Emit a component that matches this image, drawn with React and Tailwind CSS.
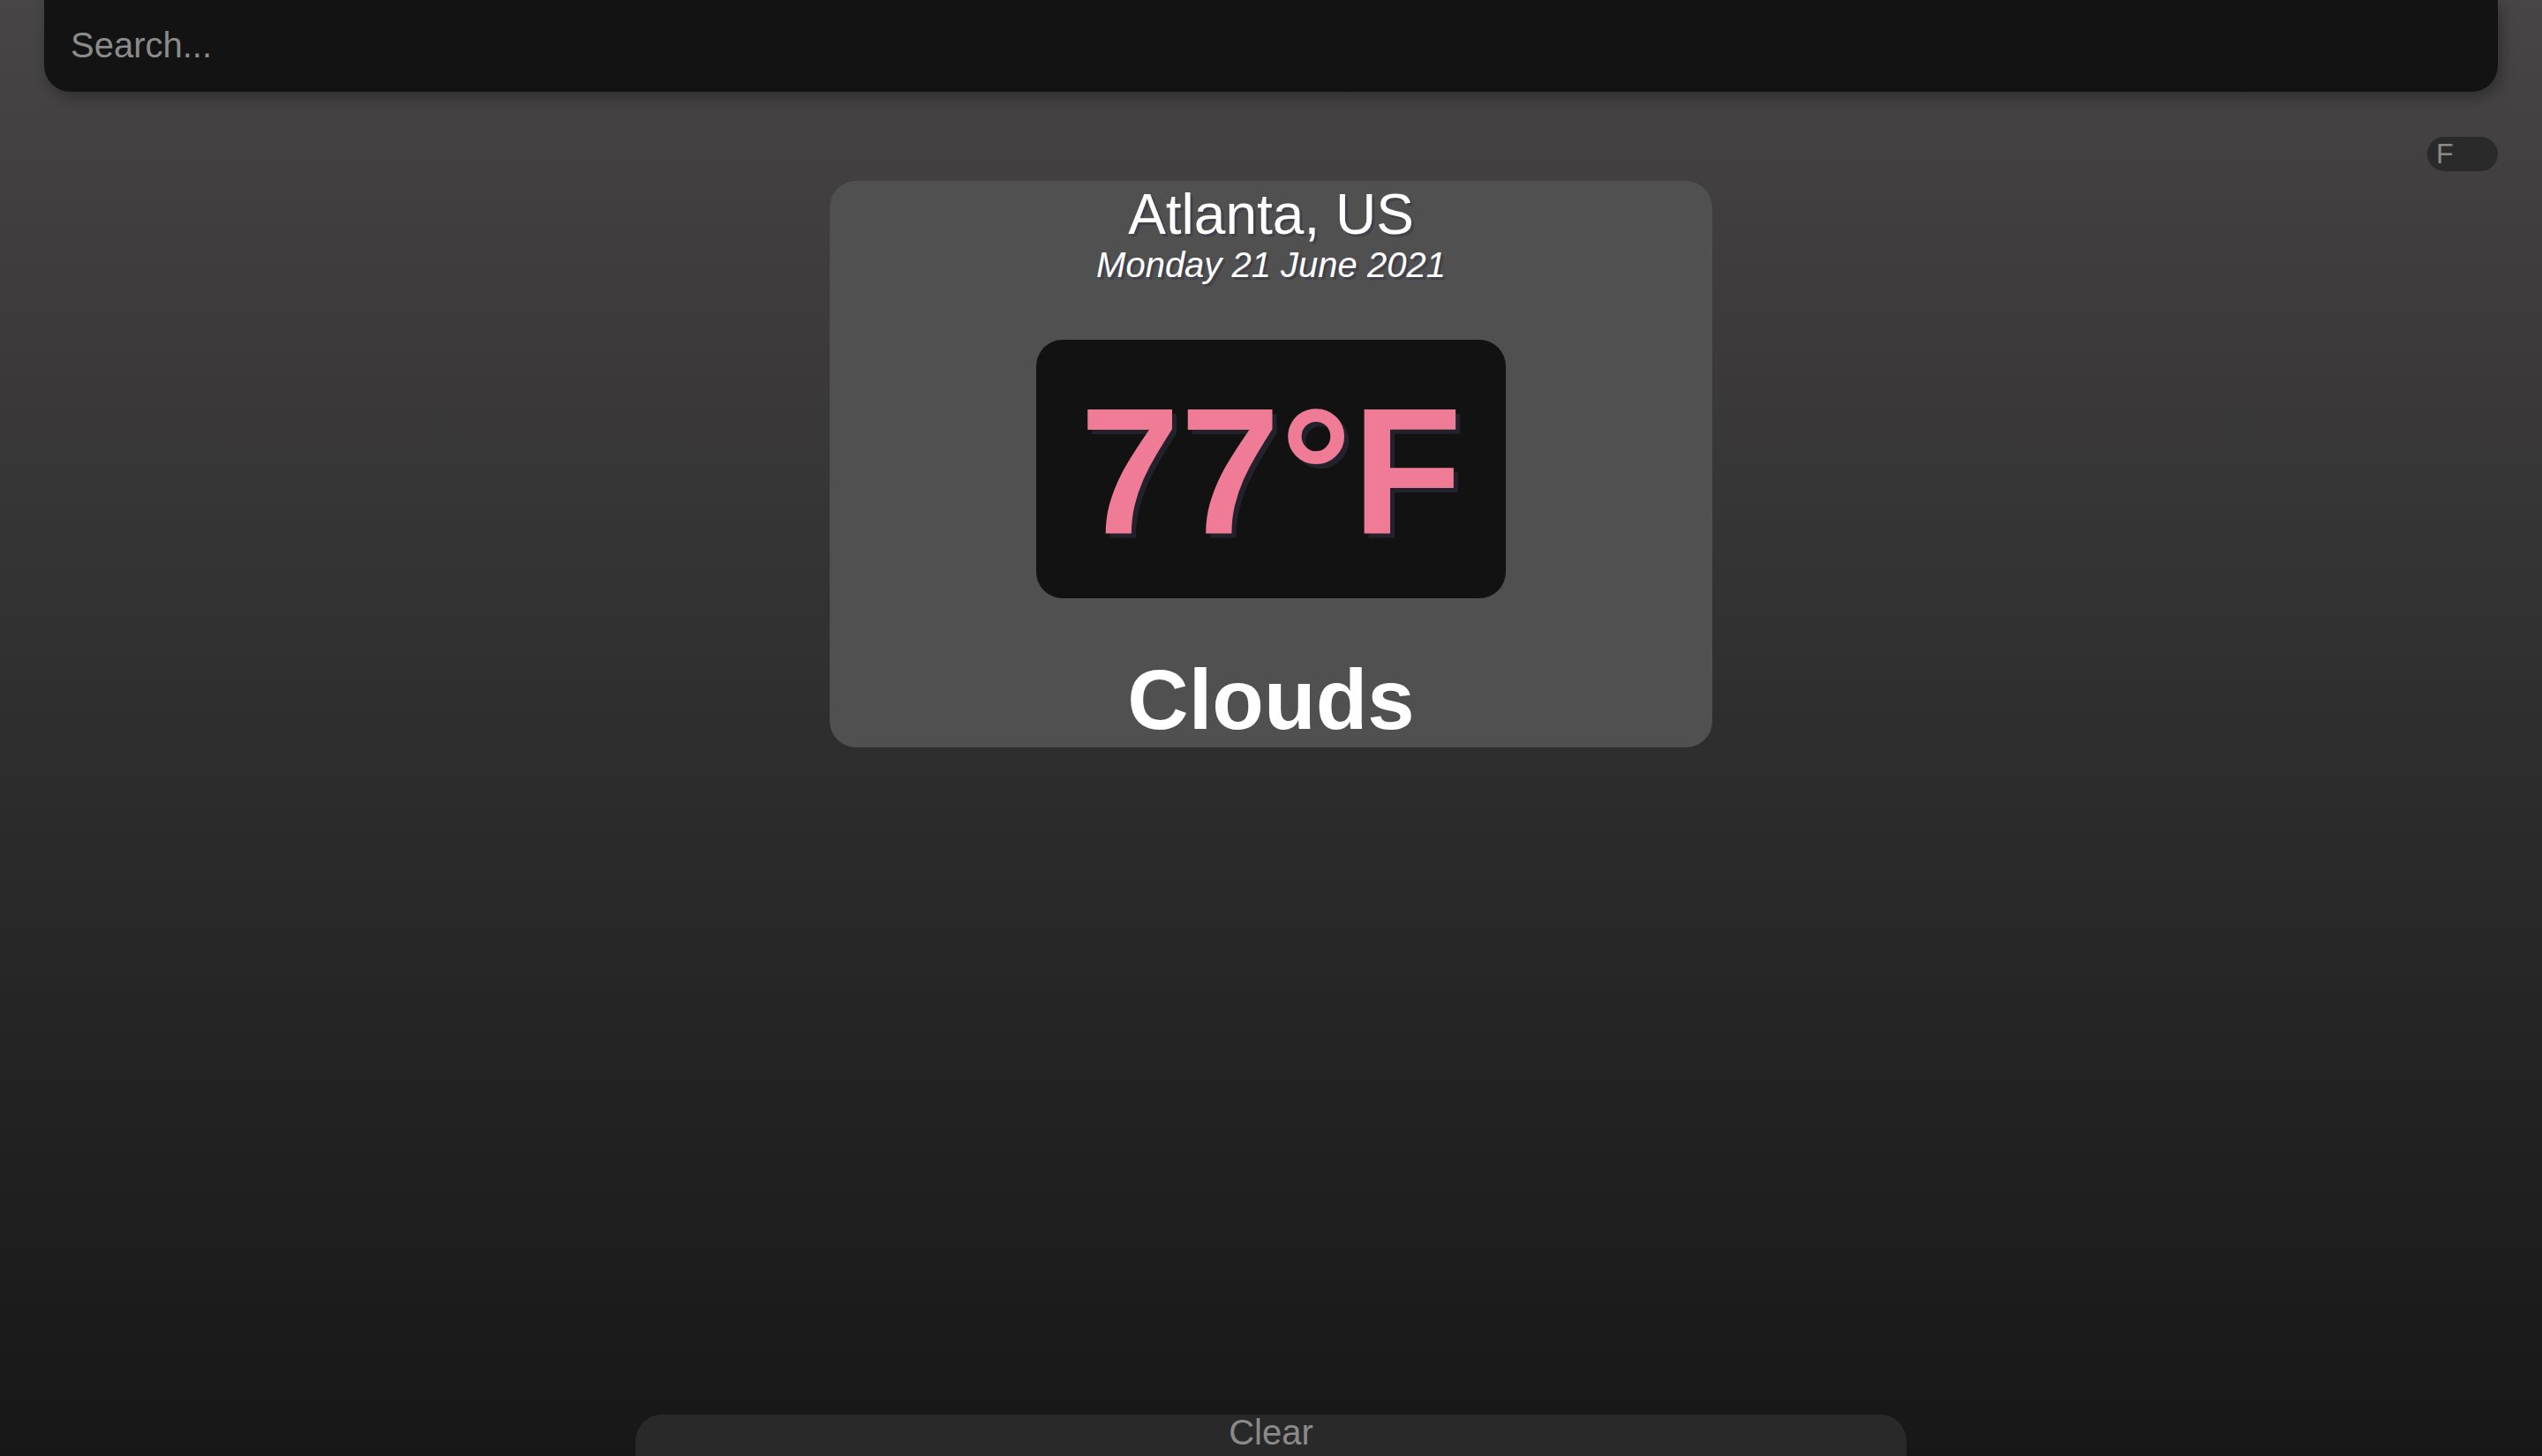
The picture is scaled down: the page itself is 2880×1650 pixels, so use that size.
import React, { useState } from "react";

const font = { fontFamily: '"Liberation Sans", Arial, sans-serif' };

const App = () => {
  const [query, setQuery] = useState("");
  const [unit, setUnit] = useState("F");

  return (
    <div
      className="h-[1650px] overflow-hidden flex flex-col bg-[linear-gradient(to_bottom,#474545,#171717)]"
      style={font}
    >
      {/* search bar */}
      <div className="mx-[50px] h-[104px] rounded-b-[30px] bg-[#131313] shadow-[4px_6px_16px_rgba(0,0,0,0.3)] flex items-center">
        <input
          type="text"
          value={query}
          onChange={(e) => setQuery(e.target.value)}
          placeholder="Search..."
          className="w-full bg-transparent outline-none pl-[30px] pb-[2px] text-[40px] text-[#cccccc] placeholder:text-[#8b8b8b]"
        />
      </div>

      {/* unit toggle */}
      <div className="flex justify-end pr-[50px] mt-[51px]">
        <button
          onClick={() => setUnit(unit === "F" ? "C" : "F")}
          className="w-[80px] h-[39px] rounded-full bg-[#2a2a2a] text-[#8a8a8a] text-[32px] leading-[39px] text-left pl-[10px]"
        >
          {unit}
        </button>
      </div>

      {/* weather card */}
      <div className="mx-auto mt-[11px] w-[1000px] rounded-[30px] bg-[#505050] flex flex-col items-center text-white">
        <div className="text-[64px] leading-[76px] [text-shadow:3px_3px_rgba(50,50,70,0.5)]">
          Atlanta, US
        </div>
        <div className="text-[40px] leading-[38px] italic [text-shadow:3px_3px_rgba(50,50,70,0.5)]">
          Monday 21 June 2021
        </div>
        <div className="mt-[66px] w-[532px] h-[293px] rounded-[30px] bg-[#121212] pt-[47px] text-center">
          <span className="text-[204px] leading-[204px] font-bold text-[#ef7b96] [text-shadow:5px_5px_rgba(50,50,70,0.5)]">
            77°F
          </span>
        </div>
        <div className="mt-[60px] text-[96px] leading-[109px] font-bold">Clouds</div>
      </div>

      <div className="flex-1" />

      {/* clear button */}
      <button className="mx-auto w-[1440px] h-[47px] rounded-t-[30px] bg-[#292929] text-[#8a8a8a] text-[40px] leading-[41px] flex justify-center items-start">
        Clear
      </button>
    </div>
  );
};

export default App;
